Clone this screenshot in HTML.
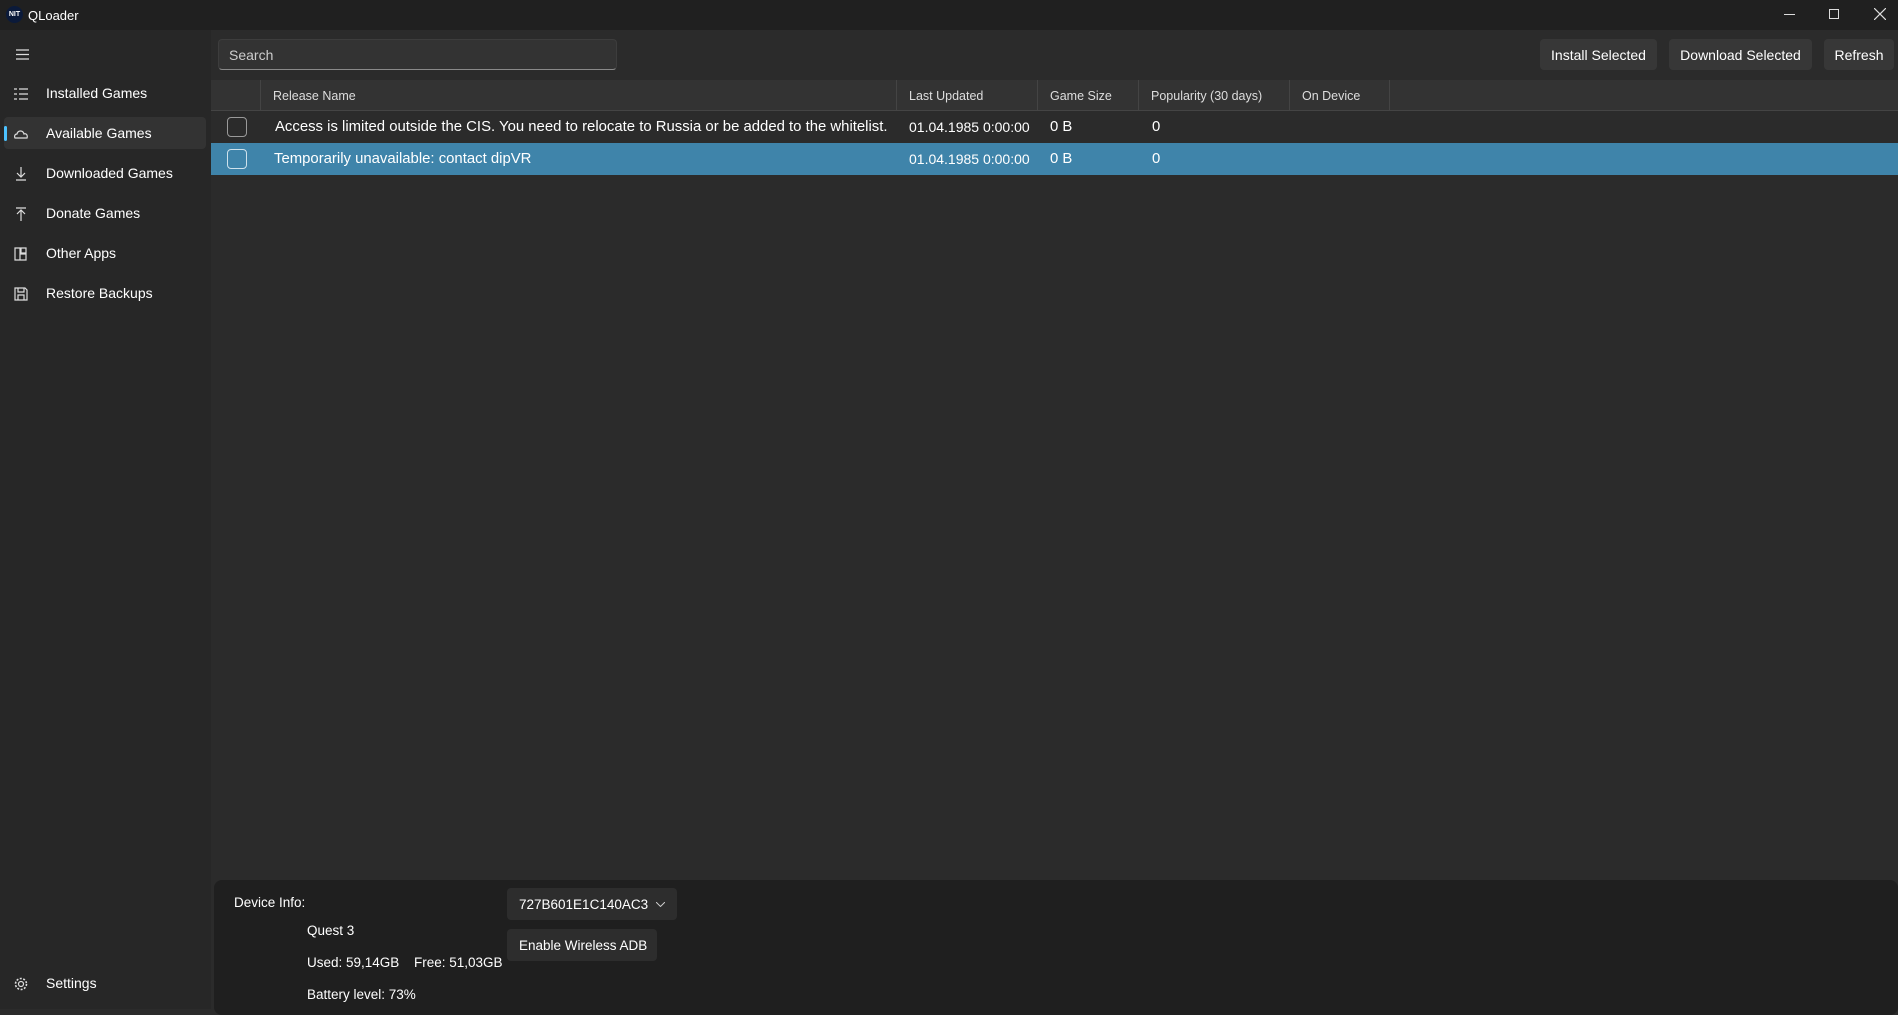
<!DOCTYPE html>
<html><head><meta charset="utf-8"><style>
*{margin:0;padding:0;box-sizing:border-box}
body{width:1898px;height:1009px;background:#2b2b2b;font-family:"Liberation Sans",sans-serif;color:#fff;position:relative;overflow:hidden}
.abs{position:absolute}
.tb{left:0;top:0;width:1898px;height:30px;background:#202020}
.side{left:0;top:30px;width:211px;height:979px;background:#272727}
.item{position:absolute;left:0;width:211px;height:32px;font-size:14px;line-height:33px}
.item span{position:absolute;left:46px}
.item svg{position:absolute;left:14px;top:10px}
.btn{position:absolute;top:39px;height:31px;background:#373737;border-radius:4px;font-size:14px;line-height:32px;text-align:center;color:#fff}
.hdr{left:211px;top:80px;width:1687px;height:31px;background:#333;border-bottom:1px solid #444}
.hc{position:absolute;top:0;height:31px;border-left:1px solid #444;font-size:12.5px;line-height:32px;padding-left:12px;color:#ddd}
.row{position:absolute;left:211px;width:1687px;height:32px;font-size:14.9px;line-height:33px}
.row div{position:absolute;top:0}
.cb{width:20px;height:20px;border:1px solid #9a9a9a;border-radius:4px;top:6px!important;left:16px;background:#2b2b2b}
.bt{position:absolute;font-size:13.5px}
</style></head><body>
<div class="abs tb">
  <div class="abs" style="left:6px;top:6px;width:17px;height:17px;border-radius:50%;background:#0b1a3a;font-size:7px;line-height:17px;text-align:center;font-weight:bold">NIT</div>
  <div class="abs" style="left:28px;top:8px;font-size:13px">QLoader</div>
  <div class="abs" style="left:1784px;top:14px;width:11px;height:1px;background:#ddd"></div>
  <div class="abs" style="left:1829px;top:9px;width:10px;height:10px;border:1px solid #ddd"></div>
  <svg class="abs" style="left:1874px;top:8px" width="12" height="12"><path d="M0 0L12 12M12 0L0 12" stroke="#ddd" stroke-width="1.2"/></svg>
</div>
<div class="abs side">
  <svg class="abs" style="left:16px;top:19px" width="13" height="11"><path d="M0 1H13M0 5.5H13M0 10H13" stroke="#ddd" stroke-width="1.2"/></svg>
</div>
<div class="abs" style="left:4px;top:117px;width:202px;height:32px;background:#333;border-radius:4px"></div>
<div class="abs" style="left:4px;top:126px;width:3px;height:15px;background:#4cc2ff;border-radius:2px"></div>
<div class="item" style="top:77px"><svg width="14" height="14"><path d="M0 2h3M5 2h9M0 7h3M5 7h9M0 12h3M5 12h9" stroke="#ddd" stroke-width="1.2"/></svg><span>Installed Games</span></div>
<div class="item" style="top:117px"><svg width="14" height="14"><path d="M1 11h12c1-3-1-5-3-4-1-4-6-4-7 0-2 0-3 2-2 4z" stroke="#ddd" fill="none" stroke-width="1.2"/></svg><span>Available Games</span></div>
<div class="item" style="top:157px"><svg width="14" height="14"><path d="M7 0v10M3 6l4 4 4-4M2 13h10" stroke="#ddd" fill="none" stroke-width="1.2"/></svg><span>Downloaded Games</span></div>
<div class="item" style="top:197px"><svg width="14" height="14"><path d="M7 14V3M3 7l4-4 4 4M2 1h10" stroke="#ddd" fill="none" stroke-width="1.2"/></svg><span>Donate Games</span></div>
<div class="item" style="top:237px"><svg width="14" height="14"><path d="M1 1h5v12H1zM6 7h6v6H6zM7 1h5v5H7z" stroke="#ddd" fill="none" stroke-width="1.2"/></svg><span>Other Apps</span></div>
<div class="item" style="top:277px"><svg width="14" height="14"><path d="M1 1h10l2 2v10H1zM4 1v4h6V1M4 13V8h6v5" stroke="#ddd" fill="none" stroke-width="1.2"/></svg><span>Restore Backups</span></div>
<div class="item" style="top:967px"><svg width="14" height="14"><circle cx="7" cy="7" r="2.5" stroke="#ddd" fill="none" stroke-width="1.2"/><circle cx="7" cy="7" r="5.5" stroke="#ddd" fill="none" stroke-width="1.6" stroke-dasharray="2 1.5"/></svg><span>Settings</span></div>

<div class="abs" style="left:218px;top:39px;width:399px;height:31px;background:#333;border:1px solid #3d3d3d;border-bottom:1px solid #8a8a8a;border-radius:4px;font-size:14px;line-height:30px;padding-left:10px;color:#ccc">Search</div>
<div class="btn" style="left:1540px;width:117px">Install Selected</div>
<div class="btn" style="left:1669px;width:143px">Download Selected</div>
<div class="btn" style="left:1824px;width:70px">Refresh</div>

<div class="abs hdr">
  <div class="hc" style="left:49px;width:636px">Release Name</div>
  <div class="hc" style="left:685px;width:141px">Last Updated</div>
  <div class="hc" style="left:826px;width:101px">Game Size</div>
  <div class="hc" style="left:927px;width:151px">Popularity (30 days)</div>
  <div class="hc" style="left:1078px;width:101px;border-right:1px solid #444">On Device</div>
</div>
<div class="row" style="top:111px;background:#2b2b2b">
  <div class="cb"></div>
  <div style="left:64px">Access is limited outside the CIS. You need to relocate to Russia or be added to the whitelist.</div>
  <div style="left:698px;font-size:14px">01.04.1985 0:00:00</div>
  <div style="left:839px">0 B</div>
  <div style="left:941px">0</div>
</div>
<div class="row" style="top:143px;background:#3f84aa">
  <div class="cb" style="background:#3f84aa;border-color:#cfe2ec"></div>
  <div style="left:63px">Temporarily unavailable: contact dipVR</div>
  <div style="left:698px;font-size:14px">01.04.1985 0:00:00</div>
  <div style="left:839px">0 B</div>
  <div style="left:941px">0</div>
</div>

<div class="abs" style="left:214px;top:880px;width:1684px;height:135px;background:#1f1f1f;border-radius:8px"></div>
<div class="bt" style="left:234px;top:895px">Device Info:</div>
<div class="bt" style="left:307px;top:923px">Quest 3</div>
<div class="bt" style="left:307px;top:955px">Used: 59,14GB</div>
<div class="bt" style="left:414px;top:955px">Free: 51,03GB</div>
<div class="bt" style="left:307px;top:987px">Battery level: 73%</div>
<div class="abs" style="left:507px;top:888px;width:170px;height:32px;background:#2d2d2d;border-radius:4px;font-size:13.5px;line-height:33px;padding-left:12px">727B601E1C140AC3<svg style="position:absolute;left:149px;top:14px" width="9" height="5"><path d="M0 0l4.5 4.5L9 0" stroke="#ccc" fill="none"/></svg></div>
<div class="abs" style="left:507px;top:929px;width:150px;height:32px;background:#2d2d2d;border-radius:4px;font-size:13.5px;line-height:33px;padding-left:12px">Enable Wireless ADB</div>
</body></html>
